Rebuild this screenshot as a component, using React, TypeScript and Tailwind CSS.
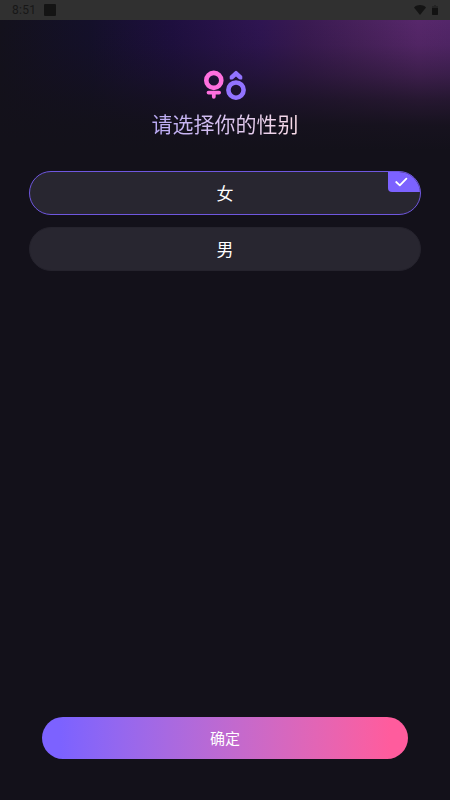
import { useState } from "react";

const genders = [
  { id: "female", label: "女" },
  { id: "male", label: "男" },
];

function StatusBar() {
  return (
    <div className="flex h-5 shrink-0 items-center justify-between bg-[#303030] px-3 text-[#171717]">
      <div className="flex items-center gap-2">
        <span className="font-[Roboto,sans-serif] text-xs leading-5 tracking-wide">8:51</span>
        <span className="size-3 rounded-[1px] bg-[#141414]" />
      </div>
      <div className="flex items-center gap-[6px]">
        <svg viewBox="0 0 12 10" className="h-[10px] w-3" fill="#141414" aria-hidden="true">
          <path d="M0 2.4C3.5-.8 8.5-.8 12 2.4L6 10Z" />
        </svg>
        <svg viewBox="0 0 6 10" className="h-[10px] w-[6px]" aria-hidden="true">
          <path d="M2 0h2v1h2v3H0V1h2Z" fill="#242424" />
          <path d="M0 3h6v6.2a.8.8 0 0 1-.8.8H.8a.8.8 0 0 1-.8-.8Z" fill="#121212" />
        </svg>
      </div>
    </div>
  );
}

function GenderIcon() {
  return (
    <svg viewBox="0 0 42 30" className="h-[30px] w-[42px]" aria-hidden="true">
      <g stroke="#ff70df" fill="none" strokeLinecap="round" strokeLinejoin="round">
        <circle cx="9.8" cy="10.4" r="7.5" strokeWidth="4.6" />
        <path d="M4.5 22.6h10.6M9.8 22.6v4.2" strokeWidth="3.8" />
      </g>
      <circle cx="32" cy="20.1" r="7.6" stroke="#9273ff" strokeWidth="4.6" fill="none" />
      <path
        d="M31 1.2a1.5 1.5 0 0 1 2 0l4.9 4.6a1.2 1.2 0 0 1 .4 1v1.7a.9.9 0 0 1-.9.9h-1.6a1.5 1.5 0 0 1-1-.4L32 6.4 29.200 9a1.500 1.500 0 0 1-1 .4h-1.600a.9.9 0 0 1-.9-.9V6.800a1.200 1.200 0 0 1 .4-1Z"
        fill="#9273ff"
      />
    </svg>
  );
}

export default function App() {
  const [selected, setSelected] = useState("female");

  return (
    <div className="flex min-h-screen flex-col bg-[#13111a] font-['Noto_Sans_CJK_SC',sans-serif] text-white">
      <StatusBar />
      <main className="flex grow flex-col bg-[linear-gradient(to_bottom,#13111a00_0,#13111a18_25px,#13111a66_55px,#13111ab8_80px,#13111af0_105px,#13111a_130px),linear-gradient(to_right,#13111c_0%,#14102a_20%,#1e0f3f_38%,#2f1552_58%,#3a1a52_68%,#48215c_80%,#57276b_93%,#54266a_100%)] bg-no-repeat pt-[50px] pb-[41px]">
        <header className="flex flex-col items-center gap-[9px]">
          <GenderIcon />
          <h1 className="bg-linear-to-r from-[#b9a9f5] to-[#fbdde8] bg-clip-text text-[21px] leading-7 font-normal text-transparent">
            请选择你的性别
          </h1>
        </header>

        <div role="radiogroup" aria-label="请选择你的性别" className="mx-[29px] mt-[34px] flex flex-col gap-3">
          {genders.map(({ id, label }) => {
            const active = selected === id;
            return (
              <label
                key={id}
                htmlFor={id}
                className={`relative flex h-11 cursor-pointer items-center justify-center overflow-hidden rounded-full border bg-[#282630] text-[17px] leading-6 ${
                  active ? "border-[#6f57df]" : "border-[#25232d]"
                }`}
              >
                <input
                  id={id}
                  type="radio"
                  name="gender"
                  value={id}
                  checked={active}
                  onChange={() => setSelected(id)}
                  className="absolute inset-0 cursor-pointer appearance-none"
                />
                {label}
                {active && (
                  <span className="absolute top-0 right-0 flex h-5 w-8 items-center rounded-bl-[4px] bg-[#7c62ff] pl-[6px]">
                    <svg viewBox="0 0 14 10" className="h-[10px] w-[14px]" fill="none" aria-hidden="true">
                      <path d="m2.200 5 3.600 3.400L12.400 1.600" stroke="#fff" strokeWidth="1.8" strokeLinecap="round" strokeLinejoin="round" />
                    </svg>
                  </span>
                )}
              </label>
            );
          })}
        </div>

        <button
          type="button"
          className="mx-[42px] mt-auto h-[42px] cursor-pointer rounded-full bg-linear-to-r from-[#7c62ff] from-5% to-[#ff5c9d] to-95% text-[15px] leading-6"
        >
          确定
        </button>
      </main>
    </div>
  );
}
